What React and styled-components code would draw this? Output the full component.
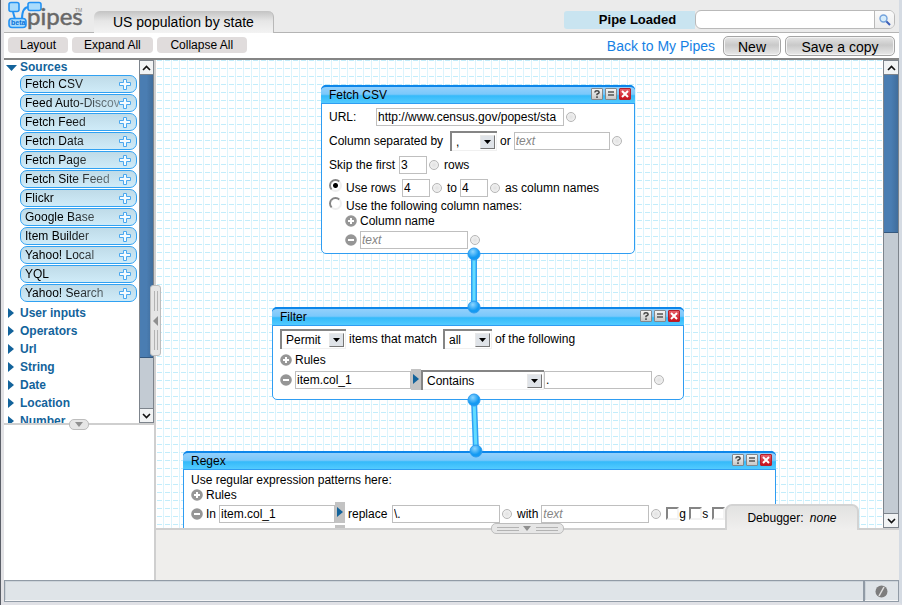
import React from "react";
import styled, { createGlobalStyle, css } from "styled-components";

const GlobalStyle = createGlobalStyle`
  * { box-sizing: border-box; }
  html, body { margin: 0; padding: 0; }
  body { font-family: "Liberation Sans", Arial, sans-serif; font-size: 13px; color: #000; overflow: hidden; }
  button, input, select { font-family: inherit; margin: 0; color: #000; }
  button { padding: 0; border: 0; background: none; }
`;

const gridTile = encodeURIComponent(
  '<svg xmlns="http://www.w3.org/2000/svg" width="8" height="8"><path d="M7.5 0v8" stroke="#dcf4fd"/><path d="M1 .5h5" stroke="#c2edfb"/><path d="M7 .5h1" stroke="#d0f0fb"/></svg>'
);

const Window = styled.div`
  display: flex;
  flex-direction: column;
  height: 100vh;
  border: solid #e0e1e6;
  border-width: 0 3px 3px 3px;
  border-left-color: #e2e2e5;
  border-right-color: #d5dbe3;
  background: #fff;
`;
const Outer = styled.div`
  border-left: 1px solid #5b5f68;
`;

const Header = styled.header`
  display: flex;
  height: 33px;
  flex: none;
  background: #ebebeb;
  border-bottom: 1px solid #b4b4b4;
`;
const Logo = styled.svg`
  width: 82px;
  height: 30px;
  margin-left: 2px;
  flex: none;
`;
const TitleTab = styled.h1`
  margin: 11px 0 -1px 6px;
  height: 22px;
  padding: 0 19px;
  border: 1px solid #b8b8b8;
  border-width: 0 1px 0 0;
  border-radius: 6px 6px 0 0;
  background: linear-gradient(#c3c3c3, #e6e6e6 45%, #f3f3f3);
  font-size: 14px;
  line-height: 22px;
  font-weight: 400;
  white-space: nowrap;
`;
const HeaderRight = styled.div`
  display: flex;
  margin: 10px 4px 0 auto;
`;
const PipeStatus = styled.output`
  width: 131px;
  height: 18px;
  margin-top: 1px;
  padding-left: 16px;
  border-radius: 3px 0 0 3px;
  background: #c9e4f0;
  font-weight: 700;
  font-size: 13px;
  line-height: 18px;
  text-align: center;
`;
const SearchForm = styled.form`
  display: flex;
  width: 200px;
  height: 19px;
  border: 1px solid #b9b9b9;
  border-radius: 6px;
  background: #fff;
  overflow: hidden;
`;
const SearchInput = styled.input`
  flex: 1;
  min-width: 0;
  border: 0;
  outline: 0;
  padding: 0 6px;
  background: transparent;
`;
const SearchButton = styled.button`
  width: 20px;
  border-left: 1px solid #b9b9b9;
  background: linear-gradient(#fafafa, #ececec);
  display: flex;
  align-items: center;
  justify-content: center;
`;

const Toolbar = styled.nav`
  display: flex;
  align-items: center;
  flex: none;
  height: 27px;
  padding: 0 4px;
  gap: 4px;
  border-bottom: 2px solid #858585;
  background: #fff;
`;
const FlatButton = styled.button`
  height: 16px;
  min-width: ${(p) => p.$w || 0}px;
  margin-bottom: 1px;
  padding: 0 12px;
  border-radius: 4px;
  background: #e0dcdc;
  font-size: 12px;
  line-height: 16px;
`;
const BackLink = styled.a`
  margin: 0 4px 0 auto;
  color: #1581e4;
  font-size: 14px;
  line-height: 24px;
  text-decoration: none;
`;
const BigButton = styled.button`
  height: 20px;
  min-width: ${(p) => p.$w}px;
  padding: 0 14px;
  border: 1px solid #a5a5a5;
  border-radius: 5px;
  box-shadow: inset 0 0 0 1px #f3f3f3;
  background: linear-gradient(#e5e5e5, #c9c9c9 45%, #e9e9e9);
  font-size: 14px;
  line-height: 20px;
`;

const Main = styled.main`
  display: flex;
  flex: 1;
  min-height: 0;
`;
const Sidebar = styled.aside`
  position: relative;
  display: flex;
  flex-direction: column;
  flex: none;
  width: 152px;
  border-right: 2px solid #cfcfcf;
`;
const TreeArea = styled.div`
  position: relative;
  display: flex;
  flex: 1;
  min-height: 0;
  border-bottom: 2px solid #cfcfcf;
`;
const Tree = styled.div`
  flex: 1;
  min-width: 0;
  overflow: hidden;
`;
const Description = styled.div`
  height: 155px;
  flex: none;
`;
const Category = styled.button`
  display: flex;
  align-items: center;
  width: 100%;
  height: ${(p) => (p.$open ? 15 : 18)}px;
  padding-left: ${(p) => (p.$open ? 2 : 4)}px;
  gap: ${(p) => (p.$open ? 3 : 6)}px;
  color: #13639b;
  font-size: 12px;
  font-weight: 700;
  line-height: 15px;
  svg { flex: none; }
`;
const ModuleList = styled.ul`
  list-style: none;
  margin: 0;
  padding: 0 2px 2px 16px;
  display: flex;
  flex-direction: column;
  gap: 1px;
`;
const ModuleItem = styled.button`
  display: flex;
  align-items: center;
  justify-content: space-between;
  width: 100%;
  height: 18px;
  padding: 0 5px 0 4px;
  border: 1px solid #30a1f2;
  border-radius: 7px;
  background: linear-gradient(#bfdbe8, #cfebf8);
  font-size: 12px;
  line-height: 16px;
  svg { flex: none; }
`;
const ModuleName = styled.span`
  flex: 1;
  overflow: hidden;
  text-align: left;
  white-space: nowrap;
  mask-image: linear-gradient(90deg, #000 40px, rgba(0, 0, 0, 0.4) 92px);
`;

const Bar = styled.div`
  display: flex;
  flex-direction: column;
  flex: none;
  width: ${(p) => p.$width}px;
  border: 1px solid #7d848c;
  background: #c3cbd3;
`;
const BarButton = styled.button`
  height: 14px;
  flex: none;
  display: flex;
  align-items: center;
  justify-content: center;
  background: #f1f3f4;
  border: solid #7d848c;
  border-width: ${(p) => (p.$end ? "1px 0 0" : "0 0 1px")};
`;
const Track = styled.div`
  flex: 1;
`;
const Thumb = styled.div`
  height: ${(p) => p.$size}%;
  background: linear-gradient(90deg, #4a7db2 50%, #406d9c);
  border-bottom: 1px solid #35587e;
`;

const Workspace = styled.section`
  position: relative;
  display: flex;
  flex-direction: column;
  flex: 1;
  min-width: 0;
`;
const CanvasRow = styled.div`
  position: relative;
  display: flex;
  flex: 1;
  min-height: 0;
`;
const Canvas = styled.div`
  position: relative;
  flex: 1;
  min-width: 0;
  overflow: hidden;
  background: #fff url("data:image/svg+xml,${gridTile}");
`;
const Wires = styled.svg`
  position: absolute;
  left: 0;
  top: 0;
  width: 100%;
  height: 100%;
  pointer-events: none;
`;
const DebugPanel = styled.div`
  flex: none;
  height: 52px;
  border-top: 2px solid #cfcfcf;
  background: #efeeec;
`;
const DebugTab = styled.button`
  position: absolute;
  right: 40px;
  bottom: -2px;
  width: 134px;
  height: 26px;
  border: 2px solid #d3d3d3;
  border-width: 2px 2px 0;
  border-radius: 7px 7px 0 0;
  background: linear-gradient(#e2e2e1, #f0efee);
  font-size: 12px;
  em { margin-left: 3px; }
`;

const Handle = styled.button`
  position: absolute;
  z-index: 2;
  display: flex;
  align-items: center;
  justify-content: center;
  border: 1px solid #bdbdbd;
  border-radius: 5px;
  background: #e6e6e6;
  ${(p) =>
    p.$kind === "tree" &&
    css`left: 65px; bottom: -7px; width: 20px; height: 11px;`}
  ${(p) =>
    p.$kind === "side" &&
    css`right: -7px; top: 225px; width: 11px; height: 71px; border-radius: 3px;`}
  ${(p) =>
    p.$kind === "debug" &&
    css`left: calc(50% - 37px); bottom: -6px; width: 73px; height: 11px;`}
`;

const Module = styled.article`
  position: absolute;
  left: ${(p) => p.$x}px;
  top: ${(p) => p.$y}px;
  width: ${(p) => p.$w}px;
  padding-bottom: ${(p) => p.$pad || 3}px;
  border: 1px solid #2f9df2;
  border-radius: 5px;
  background: #fff;
`;
const ModuleHead = styled.header`
  display: flex;
  align-items: flex-start;
  gap: 2px;
  height: 19px;
  margin: -1px -1px 1px;
  padding: 0 4px 0 8px;
  border-top: 2px solid #0c86ea;
  border-bottom: 1px solid #2f9df2;
  border-radius: 5px 5px 0 0;
  background: linear-gradient(#93d0fb, #7ac8fb 45%, #35bafa 55%, #52cbff);
`;
const ModuleTitle = styled.h2`
  flex: 1;
  margin: 0;
  font-size: 12px;
  line-height: 16px;
  font-weight: 400;
`;
const HeadButton = styled.button`
  display: flex;
  align-items: center;
  justify-content: center;
  width: 12px;
  height: 12px;
  margin-top: 1px;
  border: 1px solid ${(p) => (p.$close ? "#b3202c" : "#84888c")};
  border-radius: 1px;
  background: ${(p) =>
    p.$close ? "linear-gradient(#e8606a, #c8101c)" : "linear-gradient(#f5f5f5, #c9c9c9)"};
`;
const Row = styled.div`
  display: flex;
  align-items: center;
  height: ${(p) => p.$h || 24}px;
  padding-left: ${(p) => p.$indent || 7}px;
  gap: 3px;
  white-space: nowrap;
  font-size: 12px;
`;
const Label = styled.label`
  min-width: ${(p) => p.$w || 0}px;
`;
const Field = styled.input`
  width: ${(p) => p.$w}px;
  height: 18px;
  padding: 0 1px;
  border: 1px solid #bfbfbf;
  border-radius: 0;
  background: #fff;
  font-size: 12px;
  outline: 0;
  &::placeholder { color: #858585; font-style: italic; opacity: 1; }
`;
const FieldGroup = styled.span`
  display: flex;
  align-items: center;
`;
const Reveal = styled.button`
  display: flex;
  align-items: flex-start;
  justify-content: center;
  width: 10px;
  height: 21px;
  padding-top: 5px;
  margin-bottom: 2px;
  background: #c3c3c3;
`;
const SelectBox = styled.span`
  position: relative;
  display: inline-flex;
  width: ${(p) => p.$w}px;
  height: 20px;
  border: solid #858585;
  border-width: 2px 0 0 2px;
  background: #fff;
  box-shadow: inset -1px -1px #f0f0f0;
`;
const SelectField = styled.select`
  width: 100%;
  padding: 0 18px 1px 4px;
  border: 0;
  outline: 0;
  appearance: none;
  background: transparent;
  font-size: 12px;
`;
const SelectArrow = styled.span`
  position: absolute;
  right: 2px;
  top: 2px;
  width: 15px;
  height: 14px;
  display: flex;
  align-items: center;
  justify-content: center;
  border: 1px solid #e8e8e8;
  border-right-color: #777;
  border-bottom-color: #777;
  background: #dfe3e8;
  pointer-events: none;
`;
const Radio = styled.input`
  appearance: none;
  width: 13px;
  height: 13px;
  margin: 0 1px 5px 0;
  border: 2px solid;
  border-color: #858585 #eee #eee #858585;
  border-radius: 50%;
  &:checked { background: radial-gradient(#000 2px, transparent 3px); }
`;
const Check = styled.input`
  appearance: none;
  width: 13px;
  height: 13px;
  border: 2px solid;
  border-color: #858585 #f3f3f3 #f3f3f3 #858585;
`;
const CheckPair = styled.label`
  display: flex;
  align-items: center;
  width: 23px;
`;
const Port = styled.span`
  flex: none;
  width: 10px;
  height: 10px;
  margin: 0 2px 0 -1px;
  border: 1px solid #b5b5b5;
  border-radius: 50%;
  background: radial-gradient(#e2e2e2, #f7f7f7);
`;
const IconButton = styled.button`
  display: flex;
  flex: none;
  width: 12px;
`;

const Footer = styled.footer`
  display: flex;
  flex: none;
  height: 22px;
`;
const StatusCell = styled.div`
  flex: ${(p) => (p.$grow ? 1 : "none")};
  width: ${(p) => (p.$grow ? "auto" : "35px")};
  display: flex;
  align-items: center;
  justify-content: center;
  border: 1px solid #919ba6;
  box-shadow: inset 0 -1px #f5f6f7, inset 1px 1px #cdd4da;
  background: #dfe4e8;
`;

function Chevron({ down }) {
  return (
    <svg width="9" height="6" viewBox="0 0 9 6" fill="none" stroke="#111" strokeWidth="1.6">
      <path d={down ? "M1 1l3.500 3.500L8 1" : "M1 5l3.500-3.500L8 5"} />
    </svg>
  );
}

function ScrollBar({ width, size, label }) {
  return (
    <Bar $width={width} aria-label={label}>
      <BarButton aria-label="Scroll up"><Chevron /></BarButton>
      <Track><Thumb $size={size} /></Track>
      <BarButton $end aria-label="Scroll down"><Chevron down /></BarButton>
    </Bar>
  );
}

function RoundIcon({ minus, label }) {
  return (
    <IconButton aria-label={label}>
      <svg width="12" height="12" viewBox="0 0 12 12">
        <circle cx="6" cy="6" r="5.800" fill="#969696" />
        <path d={minus ? "M3 6h6" : "M3 6h6M6 3v6"} stroke="#fff" strokeWidth="2" />
      </svg>
    </IconButton>
  );
}

function Select({ w, value, label }) {
  return (
    <SelectBox $w={w}>
      <SelectField aria-label={label} defaultValue={value}>
        <option>{value}</option>
      </SelectField>
      <SelectArrow>
        <svg width="7" height="4" viewBox="0 0 7 4"><path d="M0 0h7L3.500 4z" /></svg>
      </SelectArrow>
    </SelectBox>
  );
}

function PathField({ label, value }) {
  return (
    <FieldGroup>
      <Field $w={116} aria-label={label} defaultValue={value} />
      <Reveal aria-label="Choose attribute">
        <svg width="6" height="10" viewBox="0 0 6 10"><path d="M0 0l6 5-6 5z" fill="#13639b" /></svg>
      </Reveal>
    </FieldGroup>
  );
}

function ModuleBox({ title, x, y, w, pad, children }) {
  return (
    <Module $x={x} $y={y} $w={w} $pad={pad}>
      <ModuleHead>
        <ModuleTitle>{title}</ModuleTitle>
        <HeadButton aria-label="Help">
          <svg width="8" height="8" viewBox="0 0 8 8" fill="none" stroke="#444" strokeWidth="1.500">
            <path d="M1.800 2.500Q2 .8 4 .8t2.200 1.500Q6.200 3.500 4 4.200V5.300M4 6.300V8" />
          </svg>
        </HeadButton>
        <HeadButton aria-label="Collapse">
          <svg width="8" height="8" viewBox="0 0 8 8"><path d="M1 2h6M1 5h6" stroke="#555" strokeWidth="1.500" /></svg>
        </HeadButton>
        <HeadButton $close aria-label="Close">
          <svg width="8" height="8" viewBox="0 0 8 8"><path d="M1 1l6 6M7 1L1 7" stroke="#fff" strokeWidth="2" /></svg>
        </HeadButton>
      </ModuleHead>
      {children}
    </Module>
  );
}

function RegexRule({ path, pattern }) {
  return (
    <Row $h={23}>
      <RoundIcon minus label="Remove rule" />
      <Label>In</Label>
      <PathField label="In" value={path} />
      <Label $w={41}>replace</Label>
      <Field $w={108} aria-label="replace" defaultValue={pattern} />
      <Port />
      <Label>with</Label>
      <Field $w={108} aria-label="with" placeholder="text" />
      <Port />
      <FieldGroup>
        <CheckPair><Check type="checkbox" />g</CheckPair>
        <CheckPair><Check type="checkbox" />s</CheckPair>
        <Check type="checkbox" aria-label="Multiline" />
      </FieldGroup>
    </Row>
  );
}

const sources = [
  "Fetch CSV", "Feed Auto-Discovery", "Fetch Feed", "Fetch Data", "Fetch Page", "Fetch Site Feed",
  "Flickr", "Google Base", "Item Builder", "Yahoo! Local", "YQL", "Yahoo! Search",
];
const categories = ["User inputs", "Operators", "Url", "String", "Date", "Location", "Number"];
const joints = [[318, 194], [318, 247], [318, 340], [320, 391]];

export default function App() {
  return (
    <Outer>
      <GlobalStyle />
      <Window>
        <Header>
          <Logo viewBox="0 0 82 30" role="img" aria-label="pipes beta">
            <g fill="#aadcfc" stroke="#2492f3" strokeWidth="1.600">
              <path d="M7 12l2 7M16 19c0-9 3-12 7-12" fill="none" strokeWidth="2" />
              <rect x="3" y="2.500" width="10" height="9" rx="2" />
              <rect x="22" y="2.500" width="13" height="8" rx="2" />
              <rect x="3" y="18.500" width="17" height="9" rx="3" />
            </g>
            <text x="21" y="25" fontFamily="Lato, sans-serif" fontSize="24" fill="#686868" stroke="#686868" strokeWidth="0.5">pipes</text>
            <text x="5" y="25" fontFamily="Liberation Sans, sans-serif" fontSize="7" fontWeight="700" fill="#0870d8">beta</text>
            <text x="69" y="12" fontFamily="Liberation Sans, sans-serif" fontSize="5" fill="#888">TM</text>
          </Logo>
          <TitleTab>US population by state</TitleTab>
          <HeaderRight>
            <PipeStatus>Pipe Loaded</PipeStatus>
            <SearchForm role="search" onSubmit={(e) => e.preventDefault()}>
              <SearchInput aria-label="Search pipes" />
              <SearchButton aria-label="Search">
                <svg width="12" height="12" viewBox="0 0 12 12">
                  <path d="M7 7l4 4" stroke="#3c5fb8" strokeWidth="2" />
                  <circle cx="4.500" cy="4.500" r="3.500" fill="#d5ecfb" stroke="#75a3dc" strokeWidth="1.400" />
                </svg>
              </SearchButton>
            </SearchForm>
          </HeaderRight>
        </Header>
        <Toolbar>
          <FlatButton>Layout</FlatButton>
          <FlatButton>Expand All</FlatButton>
          <FlatButton $w={90}>Collapse All</FlatButton>
          <BackLink href="#pipes">Back to My Pipes</BackLink>
          <BigButton $w={58}>New</BigButton>
          <BigButton $w={110}>Save a copy</BigButton>
        </Toolbar>
        <Main>
          <Sidebar>
            <TreeArea>
              <Tree>
                <Category $open>
                  <svg width="11" height="6" viewBox="0 0 11 6"><path d="M0 0h11L5.500 6z" fill="#13639b" /></svg>
                  Sources
                </Category>
                <ModuleList>
                  {sources.map((name) => (
                    <li key={name}>
                      <ModuleItem>
                        <ModuleName>{name}</ModuleName>
                        <svg width="12" height="12" viewBox="0 0 12 12">
                          <path d="M4.500 1.500h3v3h4v3h-4v4h-3v-4h-4v-3h4z" fill="#f4fbff" stroke="#4aa8f0" />
                        </svg>
                      </ModuleItem>
                    </li>
                  ))}
                </ModuleList>
                {categories.map((name) => (
                  <Category key={name}>
                    <svg width="6" height="10" viewBox="0 0 6 10"><path d="M0 0l6 5-6 5z" fill="#13639b" /></svg>
                    {name}
                  </Category>
                ))}
              </Tree>
              <ScrollBar width={15} size={85} label="Module list scroll bar" />
              <Handle $kind="tree" aria-label="Resize module list">
                <svg width="8" height="5" viewBox="0 0 8 5"><path d="M0 0h8L4 5z" fill="#909090" /></svg>
              </Handle>
            </TreeArea>
            <Description />
            <Handle $kind="side" aria-label="Collapse sidebar">
              <svg width="7" height="61" viewBox="0 0 7 61">
                <path d="M2.500 1v20M5.500 1v20M2.500 40v20M5.500 40v20" stroke="#b3b3b3" />
                <path d="M6 26v10L1 31z" fill="#909090" />
              </svg>
            </Handle>
          </Sidebar>
          <Workspace>
            <CanvasRow>
              <Canvas>
                <ModuleBox title="Fetch CSV" x={165} y={25} w={314} pad={2}>
                  <Row>
                    <Label htmlFor="csv-url" $w={44}>URL:</Label>
                    <Field id="csv-url" $w={188} defaultValue="http://www.census.gov/popest/sta" />
                    <Port />
                  </Row>
                  <Row>
                    <Label $w={118}>Column separated by</Label>
                    <Select w={47} value="," label="Column separator" />
                    <Label htmlFor="csv-sep">or</Label>
                    <Field id="csv-sep" $w={96} placeholder="text" />
                    <Port />
                  </Row>
                  <Row>
                    <Label htmlFor="csv-skip" $w={67}>Skip the first</Label>
                    <Field id="csv-skip" $w={28} defaultValue="3" />
                    <Port />
                    <span>rows</span>
                  </Row>
                  <Row $h={22}>
                    <Radio type="radio" name="names" id="use-rows" defaultChecked />
                    <Label htmlFor="use-rows" $w={53}>Use rows</Label>
                    <Field $w={28} aria-label="First row" defaultValue="4" />
                    <Port />
                    <Label>to</Label>
                    <Field $w={28} aria-label="Last row" defaultValue="4" />
                    <Port />
                    <span>as column names</span>
                  </Row>
                  <Row $h={14}>
                    <Radio type="radio" name="names" id="use-names" />
                    <Label htmlFor="use-names">Use the following column names:</Label>
                  </Row>
                  <Row $h={16} $indent={23}>
                    <RoundIcon label="Add column name" />
                    <span>Column name</span>
                  </Row>
                  <Row $h={22} $indent={23}>
                    <RoundIcon minus label="Remove column name" />
                    <Field $w={108} aria-label="Column name" placeholder="text" />
                    <Port />
                  </Row>
                </ModuleBox>

                <ModuleBox title="Filter" x={116} y={247} w={412} pad={8}>
                  <Row>
                    <Select w={66} value="Permit" label="Filter mode" />
                    <Label $w={91}>items that match</Label>
                    <Select w={49} value="all" label="Match mode" />
                    <span>of the following</span>
                  </Row>
                  <Row $h={18}>
                    <RoundIcon label="Add rule" />
                    <span>Rules</span>
                  </Row>
                  <Row $h={22}>
                    <RoundIcon minus label="Remove rule" />
                    <FieldGroup>
                      <PathField label="Item attribute" value="item.col_1" />
                      <Select w={123} value="Contains" label="Comparison" />
                      <Field $w={108} aria-label="Value" defaultValue="." />
                    </FieldGroup>
                    <Port />
                  </Row>
                </ModuleBox>

                <ModuleBox title="Regex" x={27} y={391} w={593}>
                  <Row $h={17}>Use regular expression patterns here:</Row>
                  <Row $h={14}>
                    <RoundIcon label="Add rule" />
                    <span>Rules</span>
                  </Row>
                  <RegexRule path="item.col_1" pattern="\." />
                  <RegexRule path="" pattern="" />
                </ModuleBox>

                <Wires>
                  <defs>
                    <radialGradient id="joint" cx="40%" cy="30%">
                      <stop offset="0" stopColor="#8ed6ff" />
                      <stop offset="1" stopColor="#149af2" />
                    </radialGradient>
                  </defs>
                  {[0, 2].map((i) => (
                    <g key={i} strokeLinecap="round">
                      <path d={`M${joints[i]}L${joints[i + 1]}`} stroke="#2ea2f5" strokeWidth="6" />
                      <path d={`M${joints[i]}L${joints[i + 1]}`} stroke="#62dcff" strokeWidth="3" />
                    </g>
                  ))}
                  {joints.map(([x, y]) => (
                    <circle key={y} cx={x} cy={y} r="6" fill="url(#joint)" stroke="#2d9cf0" />
                  ))}
                </Wires>
              </Canvas>
              <ScrollBar width={16} size={36} label="Canvas scroll bar" />
              <Handle $kind="debug" aria-label="Resize debugger">
                <svg width="63" height="7" viewBox="0 0 63 7">
                  <path d="M1 2.500h22M1 5.500h22M40 2.500h22M40 5.500h22" stroke="#b3b3b3" />
                  <path d="M27 1h8l-4 5z" fill="#909090" />
                </svg>
              </Handle>
              <DebugTab>
                Debugger: <em>none</em>
              </DebugTab>
            </CanvasRow>
            <DebugPanel />
          </Workspace>
        </Main>
        <Footer>
          <StatusCell $grow />
          <StatusCell>
            <svg width="13" height="13" viewBox="0 0 13 13">
              <circle cx="6.500" cy="6.500" r="6" fill="#7d7d7d" />
              <path d="M4 11L9 2" stroke="#e1e1e1" strokeWidth="1.500" />
            </svg>
          </StatusCell>
        </Footer>
      </Window>
    </Outer>
  );
}
